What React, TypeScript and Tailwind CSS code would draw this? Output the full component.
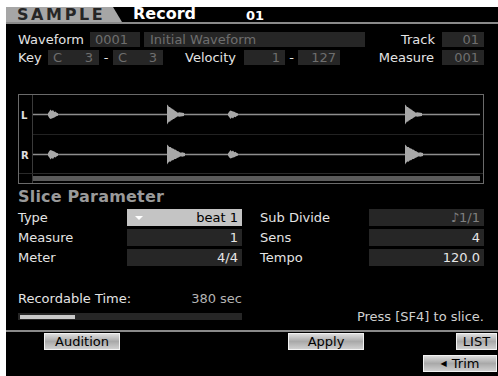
import React from "react";

const F = "font-['DejaVu_Sans',sans-serif]";

function blip(cx: number, cy: number, w: number, h: number, seed: number) {
  const up = [1.2, 3, 5, 3.5, 4.5, 2.5, 3, 1.8, 1.2];
  const dn = [1.2, 3.5, 4.5, 4, 3.5, 3, 2.2, 1.6, 1.2];
  const pts: string[] = [];
  const n = up.length - 1;
  for (let i = 0; i <= n; i++) {
    const x = cx + (i / n) * w;
    const a = ((seed ? dn[i] : up[i]) * h) / 5;
    pts.push(`${x.toFixed(1)},${(cy - a).toFixed(1)}`);
  }
  for (let i = n; i >= 0; i--) {
    const x = cx + (i / n) * w;
    const a = ((seed ? up[i] : dn[i]) * h) / 5;
    pts.push(`${x.toFixed(1)},${(cy + a).toFixed(1)}`);
  }
  return pts.join(" ");
}

function big(x0: number, cy: number, w: number, h: number, tail: number) {
  const top: string[] = [];
  const bot: string[] = [];
  const n = 10;
  for (let i = 0; i <= n; i++) {
    const t = i / n;
    const x = x0 + 1 + t * w;
    const a = Math.max(h * (1 - t * 0.8), 1.5) * (i % 2 ? 0.9 : 1);
    top.push(`${x.toFixed(1)},${(cy - a).toFixed(1)}`);
    bot.unshift(`${x.toFixed(1)},${(cy + a * 0.95).toFixed(1)}`);
  }
  top.push(`${x0 + w + 2},${cy - 2.2}`);
  top.push(`${x0 + w + tail},${cy - 1.6}`);
  top.push(`${x0 + w + tail},${cy + 1.6}`);
  top.push(`${x0 + w + 2},${cy + 2.2}`);
  return [`${x0},${cy - h - 1}`, ...top, ...bot, `${x0},${cy + h + 1}`].join(" ");
}

function Wave() {
  const g = "#8e8e8e";
  const rows = [20, 60];
  return (
    <svg width={466} height={90} className="block">
      <rect x={0.5} y={0.5} width={465} height={89} fill="#000" stroke="#6a6a6a" />
      <line x1={14.5} y1={1} x2={14.5} y2={89} stroke="#3a3a3a" />
      <line x1={15} y1={40.5} x2={465} y2={40.5} stroke="#222" />
      <line x1={1} y1={79.5} x2={465} y2={79.5} stroke="#2a2a2a" />
      <rect x={15} y={82} width={447} height={5} fill="#5a5a5a" />
      <text x={3} y={25} fill="#e0e0e0" fontSize={10} fontWeight="bold" fontFamily="DejaVu Sans, sans-serif">L</text>
      <text x={3} y={65} fill="#e0e0e0" fontSize={10} fontWeight="bold" fontFamily="DejaVu Sans, sans-serif">R</text>
      {rows.map((y, k) => (
        <g key={y}>
          <line x1={15} y1={y + 0.5} x2={462} y2={y + 0.5} stroke={g} strokeWidth={1.4} />
          <polygon points={blip(30, y + 0.5, 10, 5, k)} fill="#a8a8a8" />
          <polygon points={blip(210, y + 0.5, 10, 4.5, 1 - k)} fill="#a8a8a8" />
          <polygon points={big(149, y + 0.5, k ? 13 : 10, 9, k ? 5 : 7)} fill="#a8a8a8" />
          <polygon points={big(387, y + 0.5, k ? 13 : 10, 9, k ? 5 : 7)} fill="#a8a8a8" />
        </g>
      ))}
    </svg>
  );
}

function Box({ w, children, className = "" }: { w: string; children?: React.ReactNode; className?: string }) {
  return (
    <div className={`${w} h-[15px] bg-[#262626] text-[#6e6e6e] flex items-center leading-none ${className}`}>{children}</div>
  );
}

function PBox({ children }: { children?: React.ReactNode }) {
  return (
    <div className="w-[115px] h-[17px] flex items-center justify-end pr-[4px] leading-none bg-[#262626] text-[#e6e6e6]">
      {children}
    </div>
  );
}

function Btn({ children, w }: { children: React.ReactNode; w: string }) {
  return (
    <div
      className={`${w} h-[17px] flex items-center justify-center text-[13px] leading-none text-black border border-[#f2f2f2] bg-gradient-to-b from-[#dcdcdc] via-[#a9a9a9] to-[#cfcfcf]`}
    >
      {children}
    </div>
  );
}

export default function App() {
  return (
    <div className={`w-[498px] h-[376px] bg-white pl-[6px] pt-[7px] ${F}`}>
      <div className="w-full h-full bg-black flex flex-col text-[13px] text-[#e4e4e4]">
        {/* header */}
        <div className="h-[15px] flex items-end">
          <div className="w-[116px] h-[15px] bg-[#a6a6a6] [clip-path:polygon(0_0,107px_0,116px_100%,0_100%)] flex items-center pl-[11px]">
            <span className="text-[16px] font-bold tracking-[2.6px] text-[#262626] leading-none">SAMPLE</span>
          </div>
          <span className="ml-[11px] text-[16px] font-bold text-white leading-none">Record</span>
          <span className="ml-[50px] text-[13px] font-bold text-white leading-none">01</span>
        </div>
        <div className="h-[2px] bg-[#8a8a8a]" />

        <div className="pl-[12px] pr-[14px] flex flex-col">
          {/* row 1 */}
          <div className="mt-[8px] h-[15px] flex items-center">
            <span className="w-[72px] leading-none">Waveform</span>
            <Box w="w-[50px]" className="pl-[5px]">0001</Box>
            <Box w="w-[221px] ml-[4px]" className="pl-[6px]">Initial Waveform</Box>
            <span className="w-[70px] text-right leading-none">Track</span>
            <Box w="w-[42px] ml-[7px]" className="justify-end pr-[5px]">01</Box>
          </div>
          {/* row 2 */}
          <div className="mt-[3px] h-[15px] flex items-center">
            <span className="w-[30px] leading-none">Key</span>
            <Box w="w-[51px]" className="pl-[5px] justify-between pr-[6px]">
              <span>C</span>
              <span>3</span>
            </Box>
            <span className="w-[14px] text-center leading-none">-</span>
            <Box w="w-[50px]" className="pl-[5px] justify-between pr-[6px]">
              <span>C</span>
              <span>3</span>
            </Box>
            <span className="ml-[22px] w-[59px] leading-none">Velocity</span>
            <Box w="w-[41px]" className="justify-end pr-[5px]">1</Box>
            <span className="w-[13px] text-center leading-none">-</span>
            <Box w="w-[42px]" className="justify-end pr-[4px]">127</Box>
            <span className="w-[94px] text-right leading-none">Measure</span>
            <Box w="w-[42px] ml-[8px]" className="justify-end pr-[5px]">001</Box>
          </div>

          {/* waveform */}
          <div className="mt-[29px]">
            <Wave />
          </div>

          {/* slice parameter */}
          <div className="mt-[4px] h-[18px] flex items-center text-[16px] font-bold text-[#9a9a9a] leading-none tracking-[0.2px]">
            Slice Parameter
          </div>
          <div className="mt-[3px] flex">
            <div className="flex flex-col gap-[3px]">
              <div className="flex items-center">
                <span className="w-[109px] leading-none">Type</span>
                <div className="w-[115px] h-[17px] bg-[#c4c4c4] text-black flex items-center justify-between pl-[8px] pr-[4px] leading-none">
                  <span className="w-0 h-0 border-l-[4px] border-r-[4px] border-t-[4px] border-l-transparent border-r-transparent border-t-white" />
                  <span>beat 1</span>
                </div>
              </div>
              <div className="flex items-center">
                <span className="w-[109px] leading-none">Measure</span>
                <PBox>1</PBox>
              </div>
              <div className="flex items-center">
                <span className="w-[109px] leading-none">Meter</span>
                <PBox>4/4</PBox>
              </div>
            </div>
            <div className="ml-[18px] flex flex-col gap-[3px]">
              <div className="flex items-center">
                <span className="w-[109px] leading-none">Sub Divide</span>
                <div className="w-[115px] h-[17px] bg-[#262626] text-[#808080] flex items-center justify-end pr-[4px] leading-none">
                  ♪1/1
                </div>
              </div>
              <div className="flex items-center">
                <span className="w-[109px] leading-none">Sens</span>
                <PBox>4</PBox>
              </div>
              <div className="flex items-center">
                <span className="w-[109px] leading-none">Tempo</span>
                <PBox>120.0</PBox>
              </div>
            </div>
          </div>

          {/* recordable time */}
          <div className="mt-[24px] flex">
            <div className="w-[224px] flex flex-col">
              <div className="h-[16px] flex items-center justify-between leading-none">
                <span>Recordable Time:</span>
                <span className="text-[#b4b4b4]">380 sec</span>
              </div>
              <div className="mt-[7px] h-[7px] bg-[#262626] flex items-center pl-[2px]">
                <div className="w-[55px] h-[4px] bg-[#c8c8c8]" />
              </div>
            </div>
            <div className="flex-1 flex items-end justify-end leading-none text-[#d0d0d0]">
              <span className="mb-[-3px]">Press [SF4] to slice.</span>
            </div>
          </div>
        </div>

        <div className="mt-[10px] h-[2px] bg-[#8a8a8a]" />

        {/* buttons */}
        <div className="mt-[1px] flex pr-[1px]">
          <div className="ml-[38px]">
            <Btn w="w-[76px]">Audition</Btn>
          </div>
          <div className="ml-[168px]">
            <Btn w="w-[76px]">Apply</Btn>
          </div>
          <div className="ml-auto">
            <Btn w="w-[41px]">LIST</Btn>
          </div>
        </div>
        <div className="mt-[5px] flex justify-end pr-[1px]">
          <Btn w="w-[74px]">
            <span className="text-[8px] mr-[5px]">◀</span>Trim
          </Btn>
        </div>
      </div>
    </div>
  );
}
